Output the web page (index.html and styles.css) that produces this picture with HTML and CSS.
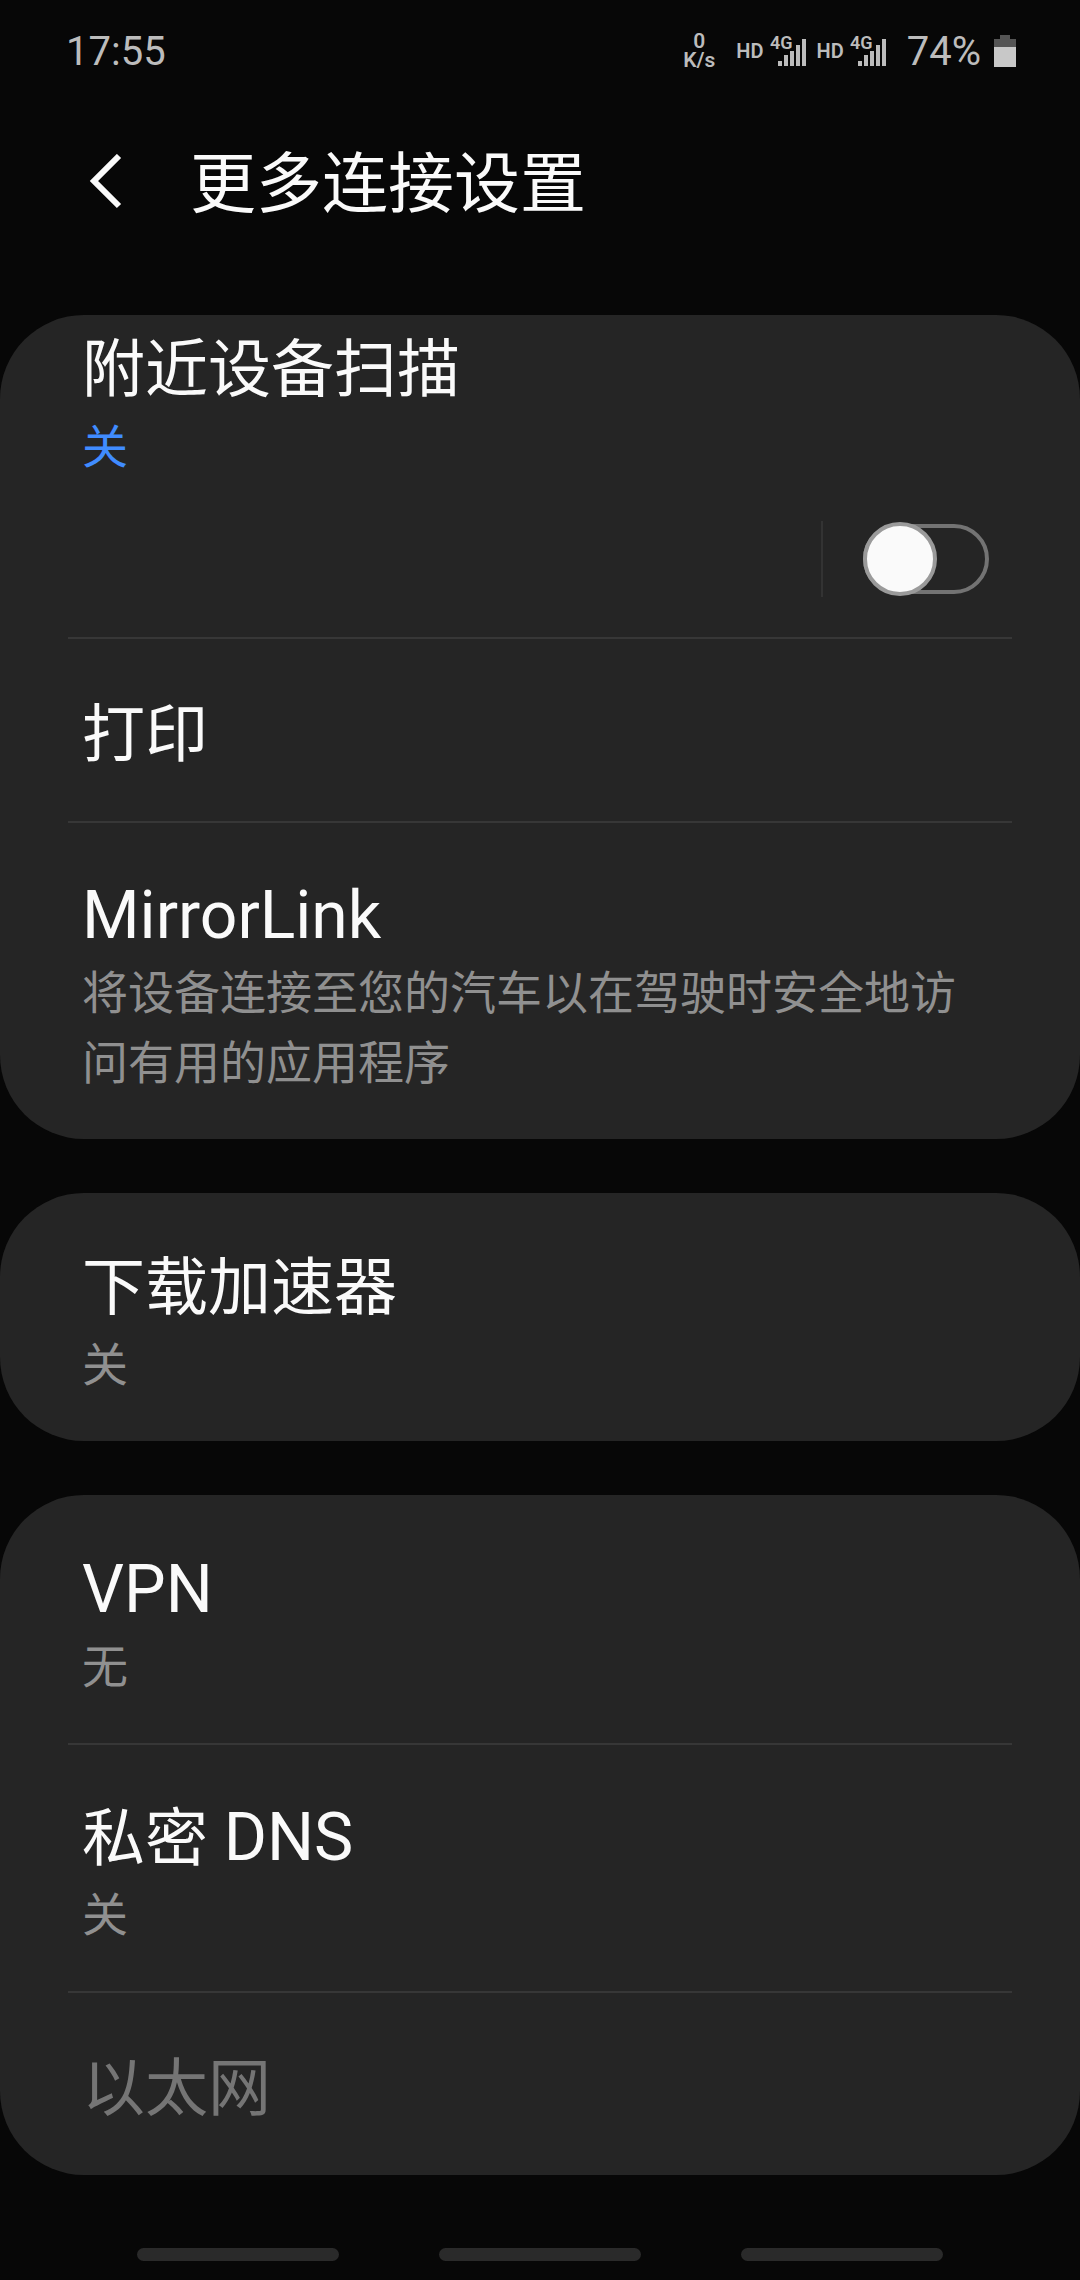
FILE: index.html
```html
<!DOCTYPE html>
<html lang="zh-CN">
<head>
<meta charset="utf-8">
<meta name="viewport" content="width=device-width, initial-scale=1">
<title>更多连接设置</title>
<link rel="stylesheet" href="styles.css">
</head>
<body>
<div class="screen">
  <div class="status-bar">
    <time class="clock">17:55</time>
    <div class="status-icons">
      <div class="net-speed"><span>0</span><span>K/s</span></div>
      <div class="sim">
        <span class="hd">HD</span>
        <svg class="signal" viewBox="0 0 36 32" aria-hidden="true">
          <text class="signal-label" x="0" y="14">4G</text>
          <path d="M8 26h4v5h-4zM14 20h4v11h-4zM20 16h4v15h-4zM26 10h4v21h-4zM32 4h4v27h-4z"/>
        </svg>
      </div>
      <div class="sim">
        <span class="hd">HD</span>
        <svg class="signal" viewBox="0 0 36 32" aria-hidden="true">
          <text class="signal-label" x="0" y="14">4G</text>
          <path d="M8 26h4v5h-4zM14 20h4v11h-4zM20 16h4v15h-4zM26 10h4v21h-4zM32 4h4v27h-4z"/>
        </svg>
      </div>
      <span class="battery-level">74%</span>
      <svg class="battery" viewBox="0 0 22 32" aria-hidden="true">
        <path class="battery-empty" d="M6 0h10v4h6v8H0V4h6z"/>
        <path class="battery-full" d="M0 12h22v20H0z"/>
      </svg>
    </div>
  </div>

  <header class="app-bar">
    <button class="back" type="button" aria-label="返回">
      <svg viewBox="0 0 34 58" aria-hidden="true"><path d="M31 2L6 27l25 25"/></svg>
    </button>
    <h1 class="app-title">更多连接设置</h1>
  </header>

  <main class="groups">
    <section class="group">
      <div class="row row-switch">
        <label class="row-label" for="nearby">
          <span class="title">附近设备扫描</span>
          <span class="summary summary-active">关</span>
        </label>
        <div class="switch-area">
          <input class="switch" id="nearby" type="checkbox" role="switch">
        </div>
      </div>
      <button class="row" type="button"><span class="title">打印</span></button>
      <button class="row" type="button">
        <span class="title"><span class="latin">MirrorLink</span></span>
        <span class="summary">将设备连接至您的汽车以在驾驶时安全地访问有用的应用程序</span>
      </button>
    </section>

    <section class="group">
      <button class="row" type="button">
        <span class="title">下载加速器</span>
        <span class="summary">关</span>
      </button>
    </section>

    <section class="group">
      <button class="row" type="button">
        <span class="title"><span class="latin">VPN</span></span>
        <span class="summary">无</span>
      </button>
      <button class="row" type="button">
        <span class="title">私密 <span class="latin">DNS</span></span>
        <span class="summary">关</span>
      </button>
      <button class="row" type="button" disabled><span class="title">以太网</span></button>
    </section>
  </main>

  <nav class="nav-bar">
    <button class="nav-key" type="button" aria-label="最近"></button>
    <button class="nav-key" type="button" aria-label="主页"></button>
    <button class="nav-key" type="button" aria-label="返回上一页"></button>
  </nav>
</div>
</body>
</html>
```
FILE: styles.css
```css
*,
*::before,
*::after {
  box-sizing: border-box;
}

body {
  margin: 0;
  background: #070707;
  color: #fafafa;
  font-family: Roboto, "Noto Sans CJK SC", sans-serif;
}

button {
  border: 0;
  padding: 0;
  background: none;
  color: inherit;
  font: inherit;
  text-align: left;
}

.screen {
  display: flex;
  flex-direction: column;
  min-height: 100vh;
}

/* Status bar */

.status-bar {
  display: flex;
  align-items: center;
  justify-content: space-between;
  height: 102px;
  padding: 0 64px 0 66px;
  color: #bcbcbc;
}

.clock,
.battery-level {
  padding-top: 2px;
  font-size: 40px;
  line-height: 48px;
}

.status-icons {
  display: flex;
  align-items: center;
}

.net-speed {
  display: flex;
  flex-direction: column;
  align-items: center;
  margin-right: 21px;
  font-size: 21px;
  font-weight: 600;
  line-height: 19px;
}

.sim {
  display: flex;
  align-items: center;
  gap: 6px;
  margin-right: 11px;
}

.hd {
  font-size: 20px;
  font-weight: 600;
  line-height: 24px;
}

.signal {
  width: 36px;
  height: 32px;
  overflow: visible;
  fill: currentColor;
}

.signal-label {
  font-size: 18px;
  font-weight: 600;
}

.battery-level {
  margin: 0 13px 0 10px;
}

.battery {
  width: 22px;
  height: 32px;
}

.battery-empty {
  fill: #555;
}

.battery-full {
  fill: #c8c8c8;
}

/* App bar */

.app-bar {
  display: flex;
  align-items: center;
  gap: 66px;
  height: 162px;
  margin-bottom: 51px;
  padding: 0 90px 0 86px;
}

.back svg {
  display: block;
  width: 38px;
  height: 58px;
  fill: none;
  stroke: #fafafa;
  stroke-width: 6;
}

.app-title {
  margin: 0;
  padding-top: 4px;
  font-size: 66px;
  font-weight: 400;
  line-height: 84px;
}

/* Setting groups */

.groups {
  display: flex;
  flex-direction: column;
  gap: 54px;
}

.group {
  border-radius: 84px;
  background: #252525;
}

.row {
  position: relative;
  display: flex;
  flex-direction: column;
  justify-content: center;
  width: 100%;
  min-height: 184px;
  padding: 53px 82px 41px;
}

.row + .row::before {
  content: "";
  position: absolute;
  top: 0;
  right: 68px;
  left: 68px;
  height: 2px;
  background: #373737;
}

.title {
  height: 84px;
  font-size: 63px;
  line-height: 84px;
}

.latin {
  font-size: 66px;
}

.summary {
  color: #909090;
  font-size: 46px;
  line-height: 70px;
}

.summary-active {
  color: #408cff;
}

.row:disabled .title {
  color: #757575;
}

.row-switch {
  padding: 13px 91px 40px 82px;
}

.row-label {
  display: flex;
  flex-direction: column;
}

.switch-area {
  display: flex;
  align-self: flex-end;
  margin-top: 39px;
  padding-left: 40px;
  border-left: 2px solid #333;
}

.switch {
  position: relative;
  width: 126px;
  height: 76px;
  margin: 0;
  appearance: none;
}

.switch::before {
  content: "";
  position: absolute;
  inset: 3px 0;
  border: 4px solid #737373;
  border-radius: 35px;
}

.switch::after {
  content: "";
  position: absolute;
  top: 1px;
  left: 0;
  width: 74px;
  height: 74px;
  border: 4px solid #9a9a9a;
  border-radius: 50%;
  background: #fafafa;
}

.switch:checked::after {
  right: 0;
  left: auto;
}

/* Navigation hints */

.nav-bar {
  display: flex;
  gap: 100px;
  margin-top: auto;
  padding: 40px 137px 19px;
}

.nav-key {
  flex: 1;
  height: 13px;
  border-radius: 7px;
  background: #2a2a2a;
}
```
